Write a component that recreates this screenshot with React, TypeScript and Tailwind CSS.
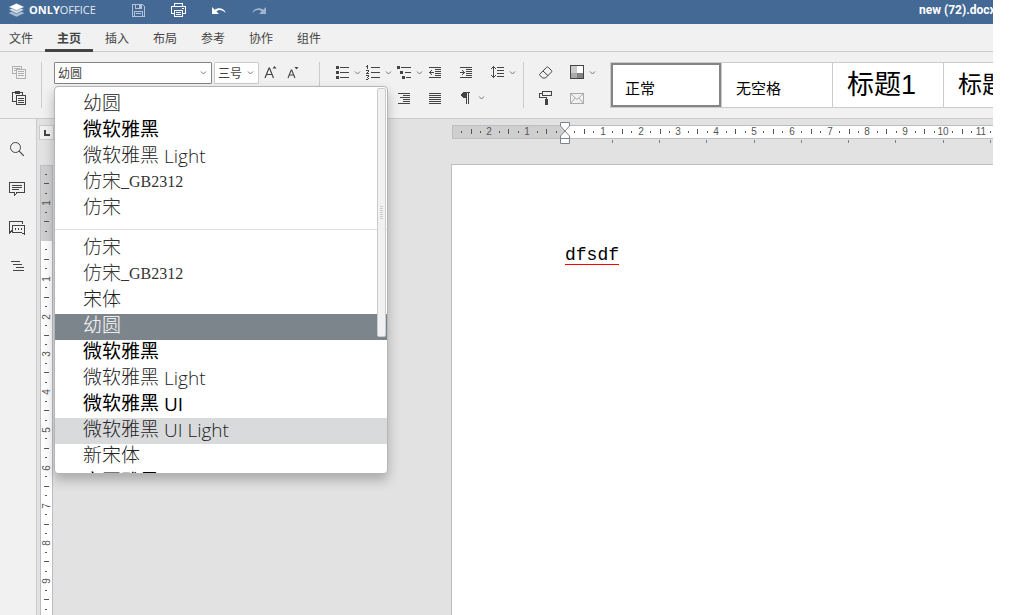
import type { ReactNode } from "react";

type FontItem = {
  id: string;
  name: string;
  latin?: string;
  face: "regular" | "light" | "song";
  state?: "selected" | "hover";
};

type StyleItem = { name: string; size: string; active?: boolean };

const tabs = ["文件", "主页", "插入", "布局", "参考", "协作", "组件"];

const recentFonts: FontItem[] = [
  { id: "r1", name: "幼圆", face: "light" },
  { id: "r2", name: "微软雅黑", face: "regular" },
  { id: "r3", name: "微软雅黑", latin: "Light", face: "light" },
  { id: "r4", name: "仿宋", latin: "_GB2312", face: "song" },
  { id: "r5", name: "仿宋", face: "song" },
];

const allFonts: FontItem[] = [
  { id: "a1", name: "仿宋", face: "song" },
  { id: "a2", name: "仿宋", latin: "_GB2312", face: "song" },
  { id: "a3", name: "宋体", face: "light" },
  { id: "a4", name: "幼圆", face: "light", state: "selected" },
  { id: "a5", name: "微软雅黑", face: "regular" },
  { id: "a6", name: "微软雅黑", latin: "Light", face: "light" },
  { id: "a7", name: "微软雅黑", latin: "UI", face: "regular" },
  { id: "a8", name: "微软雅黑", latin: "UI Light", face: "light", state: "hover" },
  { id: "a9", name: "新宋体", face: "light" },
  { id: "a10", name: "方正雅黑", face: "regular" },
];

const styles: StyleItem[] = [
  { name: "正常", size: "text-[15px]", active: true },
  { name: "无空格", size: "text-[15px]" },
  { name: "标题1", size: "text-[27px]" },
  { name: "标题2", size: "text-[24px]" },
];

const faceClass: Record<FontItem["face"], string> = {
  regular: "font-normal text-black",
  light: "font-light text-[#222]",
  song: "font-light text-[#333]",
};

const stateClass = {
  selected: "bg-[#7d858c] !text-white",
  hover: "bg-[#d8dadc]",
};

function Icon({ children, size = 16, crisp = true }: { children: ReactNode; size?: number; crisp?: boolean }) {
  return (
    <svg
      width={size}
      height={size}
      viewBox={`0 0 ${size} ${size}`}
      fill="none"
      shapeRendering={crisp ? "crispEdges" : "auto"}
      className="block shrink-0"
      aria-hidden="true"
    >
      {children}
    </svg>
  );
}

function Chevron() {
  return (
    <svg width="15" height="16" viewBox="0 0 15 16" fill="none" stroke="#777" className="block shrink-0" aria-hidden="true">
      <path d="M5 6.500l2.500 2.500L10 6.500" />
    </svg>
  );
}

function ToolButton({ label, menu, children }: { label: string; menu?: boolean; children: ReactNode }) {
  return (
    <button type="button" aria-label={label} className="flex w-[31px] shrink-0 items-center text-[#444]">
      {children}
      {menu && <Chevron />}
    </button>
  );
}

function Divider() {
  return <div className="w-px shrink-0 self-stretch bg-[#cbcbcb]" />;
}

// each row is [x, y, width] in a 16px box
function Lines({ rows }: { rows: number[][] }) {
  return (
    <>
      {rows.map(([x, y, w]) => (
        <rect key={y} x={x} y={y} width={w} height="1" fill="currentColor" />
      ))}
    </>
  );
}

function TitleBar() {
  return (
    <header className="flex h-6 shrink-0 items-center bg-[#446995] pb-1 text-white">
      <div className="flex w-[130px] items-center gap-1 pl-2">
        <svg width="17" height="14" viewBox="0 0 17 14" aria-hidden="true">
          <path d="M8.500 6.500L.500 9.900l8 3.800 8-3.800z" fill="#a9bbd0" />
          <path d="M8.500 3.400L.500 6.800l8 3.800 8-3.800z" fill="#d5deea" stroke="#446995" strokeWidth=".6" />
          <path d="M8.500.300L.500 3.900l8 3.700 8-3.700z" fill="#fff" stroke="#446995" strokeWidth=".5" />
        </svg>
        <span className="font-['Open_Sans'] text-[11px] leading-4">
          <b>ONLY</b>
          <span className="text-[#e3e9f0]">OFFICE</span>
        </span>
      </div>
      <div className="flex flex-1 items-center gap-6">
        <button type="button" aria-label="保存">
          <Icon>
            <path d="M2.500 2.500h10l2 2v10h-12zM5.500 2.500v4h6v-4M9 3h1v2H9zM4.500 14.500v-5h8v5M6 11.500h5" stroke="#b4c3d5" />
          </Icon>
        </button>
        <button type="button" aria-label="打印">
          <Icon>
            <path d="M4.500 4V1.500h8V4M4 11.500H1.500v-7h14v7H13M4.500 8.500h8v6h-8zM6 10.500h5M6 12.500h5" stroke="#fff" />
            <path d="M12 6h2v1h-2z" fill="#fff" />
          </Icon>
        </button>
        <button type="button" aria-label="撤消">
          <Icon crisp={false}>
            <path d="M2 5v7h7L6.400 9.400C8.800 7.200 12 7.500 15.800 11 14.500 6.500 9 4.500 4.700 7.700z" fill="#fff" />
          </Icon>
        </button>
        <button type="button" aria-label="重做">
          <Icon crisp={false}>
            <path d="M16 5v7H9l2.600-2.600C9.200 7.200 6 7.500 2.200 11 3.500 6.500 9 4.500 13.300 7.700z" fill="#a3b5cb" />
          </Icon>
        </button>
      </div>
      <h1 className="w-[74px] overflow-hidden whitespace-nowrap font-['Roboto'] text-xs font-bold">new (72).docx</h1>
    </header>
  );
}

function TabBar() {
  return (
    <nav className="flex h-7 shrink-0 border-b border-[#cbcbcb] text-xs text-[#444]">
      {tabs.map((tab) => (
        <button
          key={tab}
          type="button"
          className={`-mb-px px-3 first:pl-[9px] ${tab === "主页" ? "border-b-[3px] border-[#444] pt-1 font-bold" : "pt-px"}`}
        >
          {tab}
        </button>
      ))}
    </nav>
  );
}

function FontRow({ item }: { item: FontItem }) {
  const latinFace = item.face === "song" ? "font-['Liberation_Serif'] text-[16px] font-normal" : "font-['Open_Sans'] ml-[5px]";
  return (
    <li role="option" aria-selected={item.state === "selected"}>
      <button
        type="button"
        className={`flex h-[26px] w-full items-center whitespace-nowrap pb-[2px] pl-7 text-[19px] leading-[22px] ${faceClass[item.face]} ${item.state ? stateClass[item.state] : ""}`}
      >
        {item.name}
        {item.latin && <span className={latinFace}>{item.latin}</span>}
      </button>
    </li>
  );
}

function FontMenu() {
  return (
    <div className="absolute left-0 top-6 z-10 h-[388px] w-[334px] overflow-hidden rounded-[4px] border border-[#b5b5b5] bg-white shadow-[0_6px_12px_rgba(0,0,0,0.25)]">
      <ul role="listbox" aria-label="字体" className="pt-[5px]">
        {recentFonts.map((item) => (
          <FontRow key={item.id} item={item} />
        ))}
        <li role="separator" className="mb-[6px] mt-[7px] h-px bg-[#e2e2e2]" />
        {allFonts.map((item) => (
          <FontRow key={item.id} item={item} />
        ))}
      </ul>
      <div className="absolute right-px top-px flex h-[249px] w-[9px] flex-col items-center justify-center gap-px rounded-[2px] border border-[#cbcbcb] bg-[#f1f1f1]">
        {[0, 1, 2, 3, 4, 5, 6].map((n) => (
          <span key={n} className="h-px w-[3px] bg-[#cbcbcb]" />
        ))}
      </div>
    </div>
  );
}

function FontGroup() {
  return (
    <div className="relative ml-3 flex w-[265px] shrink-0 items-start gap-[2px] text-xs text-[#444]">
      <div className="flex h-[22px] w-[158px] items-center rounded-[1px] border border-[#848484] bg-white">
        <input aria-label="字体" defaultValue="幼圆" className="min-w-0 flex-1 pl-[3px] pt-px outline-none" />
        <button type="button" aria-label="打开字体列表">
          <Chevron />
        </button>
      </div>
      <div className="relative h-[22px] w-[45px] rounded-[1px] border border-[#cbcbcb] bg-white">
        <select aria-label="字号" className="h-full w-full appearance-none pl-[3px] pt-px outline-none">
          <option>三号</option>
        </select>
        <span className="pointer-events-none absolute right-0 top-[2px]">
          <Chevron />
        </span>
      </div>
      <button type="button" aria-label="增大字号" className="ml-[2px] mt-[2px]">
        <Icon size={18} crisp={false}>
          <path d="M2 14L6 4h.500L10.500 14M3.500 10.500h5.500" stroke="#444" strokeWidth="1.200" />
          <path d="M9.500 4.500L11.500 2l2 2.500z" fill="#444" />
        </Icon>
      </button>
      <button type="button" aria-label="减小字号" className="ml-[3px] mt-[2px]">
        <Icon size={18} crisp={false}>
          <path d="M2 14L5.200 6h.500L9 14M3.200 11h4.800" stroke="#444" strokeWidth="1.100" />
          <path d="M8.500 3h4l-2 2.500z" fill="#444" />
        </Icon>
      </button>
      <FontMenu />
    </div>
  );
}

function ParagraphGroup() {
  return (
    <div className="ml-[14px] flex w-[189px] shrink-0 flex-col gap-1">
      <div className="flex h-[22px] items-center">
        <ToolButton label="项目符号" menu>
          <Icon>
            <Lines rows={[[6, 2, 9], [6, 7, 9], [6, 12, 9]]} />
            <path d="M2 1h3v3H2zM2 6h3v3H2zM2 11h3v3H2z" fill="currentColor" />
          </Icon>
        </ToolButton>
        <ToolButton label="编号" menu>
          <Icon>
            <Lines rows={[[6, 2, 9], [6, 7, 9], [6, 12, 9]]} />
            <path d="M2 0h1v4H2zM1 1h1v1H1zM1 5h3v1H1zM3 6h1v1H3zM2 7h1v1H2zM1 8h3v1H1zM1 10h3v1H1zM3 11h1v1H3zM2 12h1v1H2zM3 13h1v1H3zM1 14h2v1H1z" fill="currentColor" />
          </Icon>
        </ToolButton>
        <ToolButton label="多级列表" menu>
          <Icon>
            <Lines rows={[[5, 2, 10], [9, 7, 6], [10, 12, 5]]} />
            <path d="M1 1h3v3H1zM4 6h3v3H4zM6 11h3v3H6z" fill="currentColor" />
          </Icon>
        </ToolButton>
        <ToolButton label="减少缩进">
          <Icon>
            <Lines rows={[[2, 2, 12], [8, 4, 6], [8, 6, 6], [8, 8, 6], [8, 10, 6], [2, 12, 12]]} />
            <path d="M2 7h5v1H2zM3 6h1v3H3zM4 5h1v1H4zM4 9h1v1H4z" fill="currentColor" />
          </Icon>
        </ToolButton>
        <ToolButton label="增加缩进">
          <Icon>
            <Lines rows={[[2, 2, 12], [8, 4, 6], [8, 6, 6], [8, 8, 6], [8, 10, 6], [2, 12, 12]]} />
            <path d="M2 7h5v1H2zM5 6h1v3H5zM4 5h1v1H4zM4 9h1v1H4z" fill="currentColor" />
          </Icon>
        </ToolButton>
        <ToolButton label="行距" menu>
          <Icon>
            <Lines rows={[[8, 2, 7], [8, 5, 7], [8, 8, 7], [8, 11, 7]]} />
            <path d="M4 1h1v12H4zM3 2h3v1H3zM2 3h1v1H2zM6 3h1v1H6zM3 11h3v1H3zM2 10h1v1H2zM6 10h1v1H6z" fill="currentColor" />
          </Icon>
        </ToolButton>
      </div>
      <div className="flex h-5 items-center">
        <ToolButton label="左对齐">
          <Icon>
            <Lines rows={[[2, 3, 12], [2, 5, 7], [2, 7, 10], [2, 9, 7], [2, 11, 7], [2, 13, 12]]} />
          </Icon>
        </ToolButton>
        <ToolButton label="居中">
          <Icon>
            <Lines rows={[[2, 3, 12], [5, 5, 6], [3, 7, 10], [5, 9, 6], [5, 11, 6], [2, 13, 12]]} />
          </Icon>
        </ToolButton>
        <ToolButton label="右对齐">
          <Icon>
            <Lines rows={[[2, 3, 12], [7, 5, 7], [4, 7, 10], [7, 9, 7], [7, 11, 7], [2, 13, 12]]} />
          </Icon>
        </ToolButton>
        <ToolButton label="两端对齐">
          <Icon>
            <Lines rows={[[2, 3, 12], [2, 5, 12], [2, 7, 12], [2, 9, 12], [2, 11, 12], [2, 13, 12]]} />
          </Icon>
        </ToolButton>
        <ToolButton label="非打印字符" menu>
          <Icon>
            <path d="M5 2h7v1h-1v11h-1V3H9v11H8V8H5V7H4V6H3V4h1V3h1z" fill="currentColor" />
          </Icon>
        </ToolButton>
      </div>
    </div>
  );
}

function FormatGroup() {
  return (
    <div className="ml-[14px] flex w-[72px] shrink-0 flex-col gap-1">
      <div className="flex h-[22px] items-center">
        <ToolButton label="清除样式">
          <Icon crisp={false}>
            <path d="M1.700 9.200L8.700 2.300q.8-.8 1.600 0l3.200 3.200q.7.800 0 1.500l-6 6H4.800L1.700 10.300q-.5-.6 0-1.100zM5 6l5 4.700" stroke="#444" />
          </Icon>
        </ToolButton>
        <ToolButton label="更改配色方案" menu>
          <Icon>
            <path d="M2 1h6v7H2z" fill="#cbcbcb" />
            <path d="M8 1h6v7H8z" fill="#fff" />
            <path d="M2 8h6v6H2z" fill="#aaa" />
            <path d="M8 8h6v6H8z" fill="#848484" />
            <path d="M1.500.500h13v13h-13z" stroke="#444" />
          </Icon>
        </ToolButton>
      </div>
      <div className="flex h-5 items-center">
        <ToolButton label="复制样式">
          <Icon>
            <path d="M4.500 1.500h9v4h-9zM4 3.500H1.500v4h7V9" stroke="#444" />
            <path d="M7 9h3v6H7z" fill="#444" />
          </Icon>
        </ToolButton>
        <ToolButton label="邮件合并">
          <Icon>
            <path d="M1.500 3.500h13v10h-13z" stroke="#aaa" />
            <path d="M2 4l6 5.500L14 4M2 13l4-5M14 13l-4-5" stroke="#aaa" shapeRendering="auto" />
          </Icon>
        </ToolButton>
      </div>
    </div>
  );
}

function Toolbar() {
  return (
    <div className="flex h-[67px] shrink-0 border-b border-[#cbcbcb] py-[10px]">
      <div className="flex w-[41px] shrink-0 flex-col gap-1 pl-[11px]">
        <button type="button" aria-label="复制" className="flex h-[22px] items-center">
          <Icon>
            <path d="M5 8.500H1.500v-7h9V4M3 3.500h6M3 5.500h2M5.500 4.500h9v9h-9zM7 6.500h6M7 8.500h6M7 10.500h6" stroke="#b0b0b0" />
          </Icon>
        </button>
        <button type="button" aria-label="粘贴" className="flex h-5 items-center">
          <Icon>
            <path d="M5 11.500H1.500v-9h10V5M5.500 5.500h9v9h-9zM7 8.500h6M7 10.500h6M7 12.500h6" stroke="#444" />
            <path d="M4 1h5v3H4z" fill="#444" />
          </Icon>
        </button>
      </div>
      <Divider />
      <FontGroup />
      <Divider />
      <ParagraphGroup />
      <Divider />
      <FormatGroup />
      <div className="flex min-w-0 flex-1 overflow-hidden border-y border-l border-[#cbcbcb] bg-white text-black">
        {styles.map((style) => (
          <div key={style.name} className="w-[111px] shrink-0 border-r border-[#cbcbcb]">
            <button
              type="button"
              className={`flex h-full w-full items-end whitespace-nowrap border-2 pl-3 ${style.active ? "border-[#848484]" : "border-transparent"} ${style.size} ${style.size === "text-[15px]" ? "pb-[6px] leading-5" : "pb-1 leading-8"}`}
            >
              {style.name}
            </button>
          </div>
        ))}
      </div>
    </div>
  );
}

function SideBar() {
  return (
    <aside className="flex w-[37px] shrink-0 flex-col items-start gap-[23px] border-r border-[#cbcbcb] pl-[9px] pt-[23px]">
      <button type="button" aria-label="搜索">
        <Icon crisp={false}>
          <circle cx="6.500" cy="5.500" r="5" stroke="#444" />
          <path d="M10.200 9.200l4.600 4.600" stroke="#444" strokeWidth="1.200" />
        </Icon>
      </button>
      <button type="button" aria-label="批注">
        <Icon>
          <path d="M.500 1.500h15v10H8l-2.500 3v-3h-5z" stroke="#444" />
          <path d="M3 4.500h10M3 6.500h10M3 8.500h7" stroke="#444" />
        </Icon>
      </button>
      <button type="button" aria-label="聊天">
        <Icon>
          <path d="M3 10.500L.500 13V1.500h13V4M3.500 5.500h12v9l-3-2h-9z" stroke="#444" />
          <path d="M6 8h1v2H6zM9 8h1v2H9zM12 8h1v2h-1z" fill="#444" />
        </Icon>
      </button>
      <button type="button" aria-label="导航">
        <Icon>
          <path d="M2 2.500h9M4 5.500h9M7 8.500h8M4 11.500h11" stroke="#444" />
        </Icon>
      </button>
    </aside>
  );
}

const CM = 37.8;

type Mark = { at: number; kind: "number" | "half" | "quarter"; label: string };

function rulerMarks(from: number, to: number): Mark[] {
  const marks: Mark[] = [];
  for (let q = from; q <= to; q++) {
    if (q === 0) continue;
    const kind = q % 4 === 0 ? "number" : q % 2 === 0 ? "half" : "quarter";
    marks.push({ at: (q * CM) / 4, kind, label: String(Math.abs(q) / 4) });
  }
  return marks;
}

function HorizontalRuler() {
  const zero = 113;
  return (
    <svg height="24" className="block w-full font-['Liberation_Sans']" aria-hidden="true">
      <rect y="3" width="100%" height="14" fill="#bbbec2" />
      <rect x="1" y="4" width={zero - 1} height="12" fill="#cfcfcf" />
      <rect x={zero} y="4" width="100%" height="12" fill="#fff" />
      {rulerMarks(-11, 45).map(({ at, kind, label }) => {
        const x = Math.round(zero + at);
        if (kind === "number") {
          return (
            <text key={at} x={x} y="13" textAnchor="middle" fontSize="10" fill="#555">
              {label}
            </text>
          );
        }
        return (
          <rect key={at} x={x} y={kind === "half" ? 7 : 9} width="1" height={kind === "half" ? 5 : 2} fill="#555" />
        );
      })}
      {[1, 2, 3, 4, 5, 6, 7, 8, 9].map((n) => (
        <rect key={n} x={Math.round(zero + n * 47.25 - 0.5)} y="18" width="1" height="3" fill="#7d858c" />
      ))}
      <path
        d="M108.500.500h9v3.500l-4.500 5 4.500 5v7.500h-9V14l4.500-5-4.500-5zM108.500 16.500h9"
        fill="#fff"
        stroke="#7d858c"
      />
    </svg>
  );
}

function VerticalRuler() {
  const zero = 76;
  return (
    <svg width="13" height="100%" className="block min-h-0 flex-1 font-['Liberation_Sans']" aria-hidden="true">
      <rect width="13" height="100%" fill="#bbbec6" />
      <rect x="1" y="1" width="11" height={zero - 1} fill="#cfcfcf" />
      <rect x="1" y={zero} width="11" height="100%" fill="#fff" />
      {rulerMarks(-7, 39).map(({ at, kind, label }) => {
        const y = Math.round(zero + at);
        if (kind === "number") {
          return (
            <text key={at} transform={`translate(10 ${y}) rotate(-90)`} textAnchor="middle" fontSize="10" fill="#555">
              {label}
            </text>
          );
        }
        return (
          <rect key={at} x={kind === "half" ? 4 : 5} y={y - 1} width={kind === "half" ? 5 : 2} height="1" fill="#555" />
        );
      })}
    </svg>
  );
}

function Editor() {
  return (
    <main className="flex min-w-0 flex-1 overflow-hidden bg-[#e2e2e2] pl-[2px]">
      <div className="flex w-[15px] shrink-0 flex-col items-center gap-[25px] pt-[6px]">
        <button type="button" aria-label="制表符" className="flex h-[15px] w-[15px] items-center justify-center border border-[#cbcbcb] bg-[#f1f1f1]">
          <svg width="7" height="7" viewBox="0 0 7 7" aria-hidden="true">
            <path d="M1 1h2v4h4v2H1z" fill="#444" />
          </svg>
        </button>
        <VerticalRuler />
      </div>
      <div className="ml-[397px] flex min-w-0 flex-1 flex-col pt-[3px]">
        <div className="pl-px">
          <HorizontalRuler />
        </div>
        <article className="mt-[18px] flex-1 border-l border-t border-[#bbbec2] bg-white pl-[113px] pt-[78px]">
          <p className="font-['Liberation_Mono'] text-lg leading-6 text-black">
            <span className="inline-block border-b border-[#f00] leading-[18px]">dfsdf</span>
          </p>
        </article>
      </div>
    </main>
  );
}

export default function App() {
  return (
    <div className="h-screen bg-white pr-[31px]">
      <div className="flex h-full flex-col bg-[#f1f1f1] font-['Liberation_Sans','Noto_Sans_CJK_SC',sans-serif]">
        <TitleBar />
        <TabBar />
        <Toolbar />
        <div className="flex min-h-0 flex-1">
          <SideBar />
          <Editor />
        </div>
      </div>
    </div>
  );
}
